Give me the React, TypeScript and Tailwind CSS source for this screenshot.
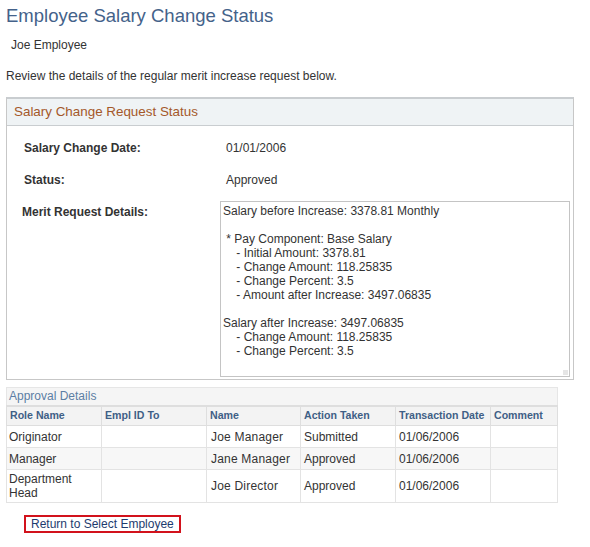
import React from 'react';

const details = [
  'Salary before Increase: 3378.81 Monthly',
  '',
  ' * Pay Component: Base Salary',
  '    - Initial Amount: 3378.81',
  '    - Change Amount: 118.25835',
  '    - Change Percent: 3.5',
  '    - Amount after Increase: 3497.06835',
  '',
  'Salary after Increase: 3497.06835',
  '    - Change Amount: 118.25835',
  '    - Change Percent: 3.5',
];

const rows = [
  { role: 'Originator', name: 'Joe Manager', action: 'Submitted', date: '01/06/2006', alt: false },
  { role: 'Manager', name: 'Jane Manager', action: 'Approved', date: '01/06/2006', alt: true },
  { role: 'Department Head', name: 'Joe Director', action: 'Approved', date: '01/06/2006', alt: false },
];

export default function App() {
  return (
    <div className="min-h-screen bg-white text-[12px] text-[#333] font-['Liberation_Sans',Arial,sans-serif]">
      <div className="px-[6px] pt-[5px]">
        <h1 className="text-[18.5px] leading-[22px] text-[#44628a]">Employee Salary Change Status</h1>
        <div className="mt-[11px] pl-[5px] text-[#333] leading-[14px]">Joe Employee</div>
        <p className="mt-[17px] leading-[14px]">Review the details of the regular merit increase request below.</p>

        {/* panel */}
        <div className="mt-[14px] w-[568px] border border-[#c7c7c7] border-t-2 border-t-[#c9cdd0]">
          <div className="h-[27px] flex items-center pl-[7px] bg-[#eff3f5] border-b border-[#c9cdd0] text-[13.4px] text-[#a4582a]">
            Salary Change Request Status
          </div>
          <div className="flex flex-col pt-[13px] pb-[2px]">
            <div className="flex h-[32px] items-start">
              <div className="w-[219px] pl-[17px] font-bold">Salary Change Date:</div>
              <div>01/01/2006</div>
            </div>
            <div className="flex h-[30px] items-start">
              <div className="w-[219px] pl-[17px] font-bold">Status:</div>
              <div>Approved</div>
            </div>
            <div className="flex items-start">
              <div className="w-[213px] pl-[15px] pt-[2px] font-bold">Merit Request Details:</div>
              <div className="relative w-[350px] h-[176px] border border-[#c4c4c4] px-[2px] pt-[2px] whitespace-pre leading-[14px] overflow-hidden">
                {details.map((l, i) => (
                  <div key={i} className="h-[14px]">{l}</div>
                ))}
                <div className="absolute right-[1px] bottom-[1px] w-[5px] h-[5px] bg-[#e5e5e5]" />
              </div>
            </div>
          </div>
        </div>

        {/* approval table */}
        <table className="mt-[7px] w-[551px] border-collapse table-fixed">
          <colgroup>
            <col className="w-[95px]" />
            <col className="w-[105px]" />
            <col className="w-[94px]" />
            <col className="w-[95px]" />
            <col className="w-[95px]" />
            <col className="w-[67px]" />
          </colgroup>
          <thead>
            <tr>
              <th colSpan={6} className="h-[18px] bg-[#f5f5f5] border border-[#e6e6e6] text-left font-normal text-[#5c7ea4] pl-[2px] leading-[14px]">
                Approval Details
              </th>
            </tr>
            <tr className="bg-[#f3f3f3]">
              {['Role Name', 'Empl ID To', 'Name', 'Action Taken', 'Transaction Date', 'Comment'].map(h => (
                <th key={h} className="h-[20px] border border-[#dedede] border-t-2 text-left font-bold text-[10.6px] text-[#3f5f86] pl-[3px] whitespace-nowrap">
                  {h}
                </th>
              ))}
            </tr>
          </thead>
          <tbody>
            {rows.map(r => (
              <tr key={r.role} className={r.alt ? 'bg-[#f7f7f7]' : 'bg-white'}>
                <td className="h-[22px] border border-[#e3e3e3] pl-[2px] leading-[14px] align-middle">
                  {r.role === 'Department Head' ? <div className="py-[2px]">Department<br />Head</div> : r.role}
                </td>
                <td className="border border-[#e3e3e3]" />
                <td className="border border-[#e3e3e3] pl-[4px] tracking-[0.2px]">{r.name}</td>
                <td className="border border-[#e3e3e3] pl-[3px]">{r.action}</td>
                <td className="border border-[#e3e3e3] pl-[3px]">{r.date}</td>
                <td className="border border-[#e3e3e3]" />
              </tr>
            ))}
          </tbody>
        </table>

        <div className="mt-[12px] pl-[18px]">
          <a href="#" className="inline-block border-2 border-[#d2121c] px-[5px] leading-[14px] py-[0px] text-[#1d3b6e]">
            Return to Select Employee
          </a>
        </div>
      </div>
    </div>
  );
}
